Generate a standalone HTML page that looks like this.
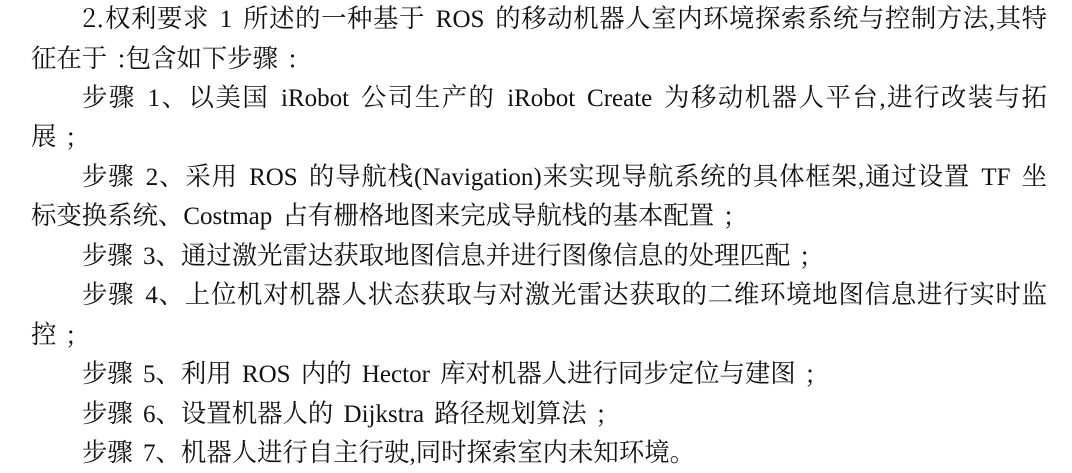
<!DOCTYPE html>
<html><head><meta charset="utf-8"><style>
html,body{margin:0;padding:0;background:#fff;width:1072px;height:470px;overflow:hidden}
body{font-family:"Noto Serif CJK SC","Liberation Serif",serif;font-size:25.4px;color:#111}
.l{position:absolute;left:31px;width:1016px;height:39.45px;line-height:39.45px;white-space:nowrap}
.j{text-align:justify;text-align-last:justify;white-space:normal}
.i{padding-left:51px;box-sizing:border-box}
.m{font-family:"Liberation Serif",serif;font-size:25px;word-spacing:4px}
</style></head><body>
<div class="l i j" style="top:-2px">2.权利要求<span class="m"> 1 </span>所述的一种基于<span class="m"> ROS </span>的移动机器人室内环境探索系统与控制方法<span class="m">,</span>其特</div>
<div class="l" style="top:37.5px">征在于<span class="m"> </span>:包含如下步骤<span class="m"> </span>:</div>
<div class="l i j" style="top:77px">步骤<span class="m"> 1</span>、以美国<span class="m"> iRobot </span>公司生产的<span class="m"> iRobot Create </span>为移动机器人平台<span class="m">,</span>进行改装与拓</div>
<div class="l" style="top:116.4px">展<span class="m"> </span>;</div>
<div class="l i j" style="top:155.8px">步骤<span class="m"> 2</span>、采用<span class="m"> ROS </span>的导航栈<span class="m">(Navigation)</span>来实现导航系统的具体框架<span class="m">,</span>通过设置<span class="m"> TF </span>坐</div>
<div class="l" style="top:195.3px">标变换系统、<span class="m">Costmap </span>占有栅格地图来完成导航栈的基本配置<span class="m"> </span>;</div>
<div class="l i" style="top:234.7px">步骤<span class="m"> 3</span>、通过激光雷达获取地图信息并进行图像信息的处理匹配<span class="m"> </span>;</div>
<div class="l i j" style="top:274.2px">步骤<span class="m"> 4</span>、上位机对机器人状态获取与对激光雷达获取的二维环境地图信息进行实时监</div>
<div class="l" style="top:313.6px">控<span class="m"> </span>;</div>
<div class="l i" style="top:353px">步骤<span class="m"> 5</span>、利用<span class="m"> ROS </span>内的<span class="m"> Hector </span>库对机器人进行同步定位与建图<span class="m"> </span>;</div>
<div class="l i" style="top:392.5px">步骤<span class="m"> 6</span>、设置机器人的<span class="m"> Dijkstra </span>路径规划算法<span class="m"> </span>;</div>
<div class="l i" style="top:432px">步骤<span class="m"> 7</span>、机器人进行自主行驶<span class="m">,</span>同时探索室内未知环境。</div>
</body></html>
